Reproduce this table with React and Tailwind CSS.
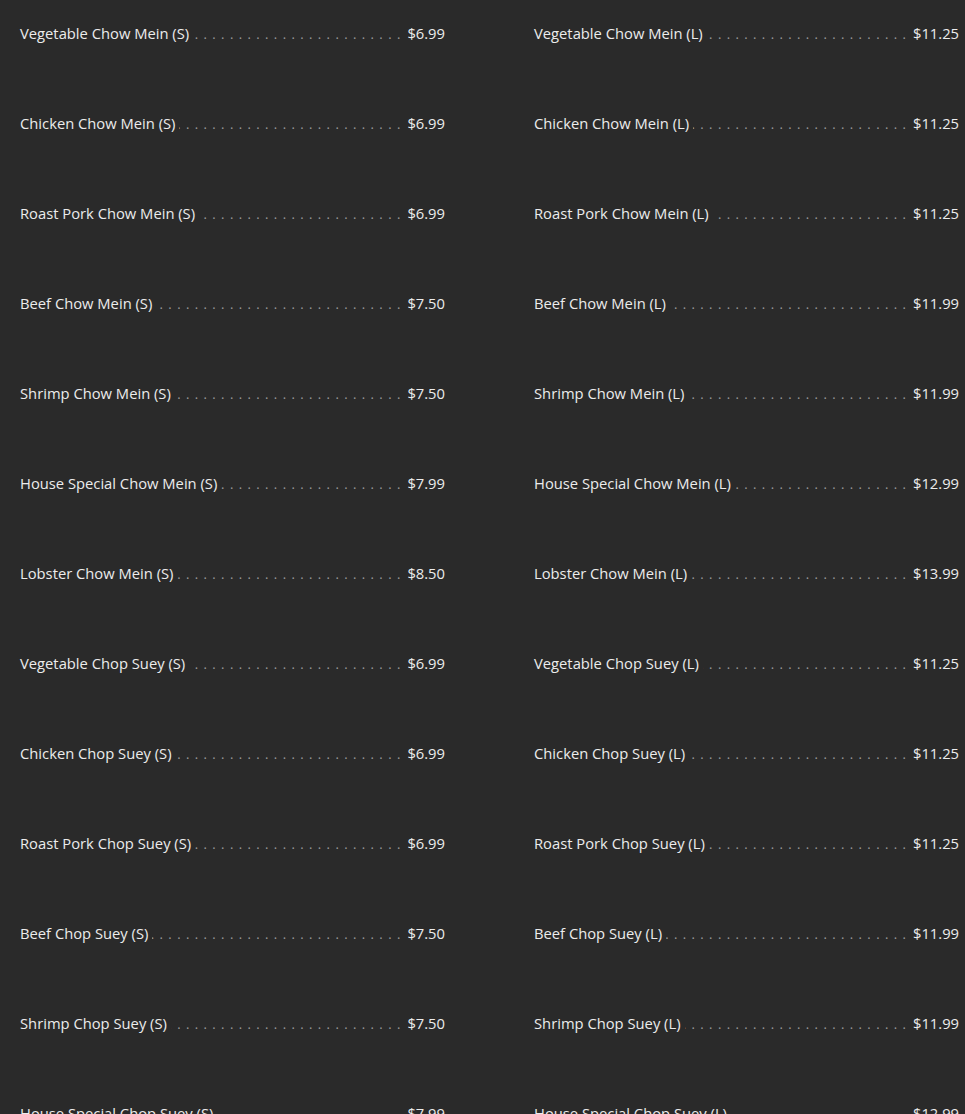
import React from 'react';

const rows = [
  ['Vegetable Chow Mein', '$6.99', '$11.25'],
  ['Chicken Chow Mein', '$6.99', '$11.25'],
  ['Roast Pork Chow Mein', '$6.99', '$11.25'],
  ['Beef Chow Mein', '$7.50', '$11.99'],
  ['Shrimp Chow Mein', '$7.50', '$11.99'],
  ['House Special Chow Mein', '$7.99', '$12.99'],
  ['Lobster Chow Mein', '$8.50', '$13.99'],
  ['Vegetable Chop Suey', '$6.99', '$11.25'],
  ['Chicken Chop Suey', '$6.99', '$11.25'],
  ['Roast Pork Chop Suey', '$6.99', '$11.25'],
  ['Beef Chop Suey', '$7.50', '$11.99'],
  ['Shrimp Chop Suey', '$7.50', '$11.99'],
  ['House Special Chop Suey', '$7.99', '$12.99'],
];

const DOTS = '. '.repeat(80);

const MenuItem = ({ name, price }) => (
  <div className="flex items-baseline h-[90px] pt-[21px] text-[14.75px] leading-[24px] text-[#ececec]">
    <span className="whitespace-nowrap">{name}</span>
    <div className="flex-1 flex justify-end overflow-hidden ml-[4px] mr-[6px]">
      <span className="whitespace-nowrap text-[#9a9a9a] text-[13px] tracking-[1px]">{DOTS}</span>
    </div>
    <span className="whitespace-nowrap">{price}</span>
  </div>
);

export default function App() {
  return (
    <div
      className="bg-[#2a2a2a] pl-[20px] overflow-hidden h-[1114px]"
      style={{ fontFamily: '"Open Sans", "Liberation Sans", sans-serif' }}
    >
      <div className="grid grid-cols-[425px_425px] gap-x-[89px]">
        {rows.map(([name, small, large]) => (
          <React.Fragment key={name}>
            <MenuItem name={`${name} (S)`} price={small} />
            <MenuItem name={`${name} (L)`} price={large} />
          </React.Fragment>
        ))}
      </div>
    </div>
  );
}
